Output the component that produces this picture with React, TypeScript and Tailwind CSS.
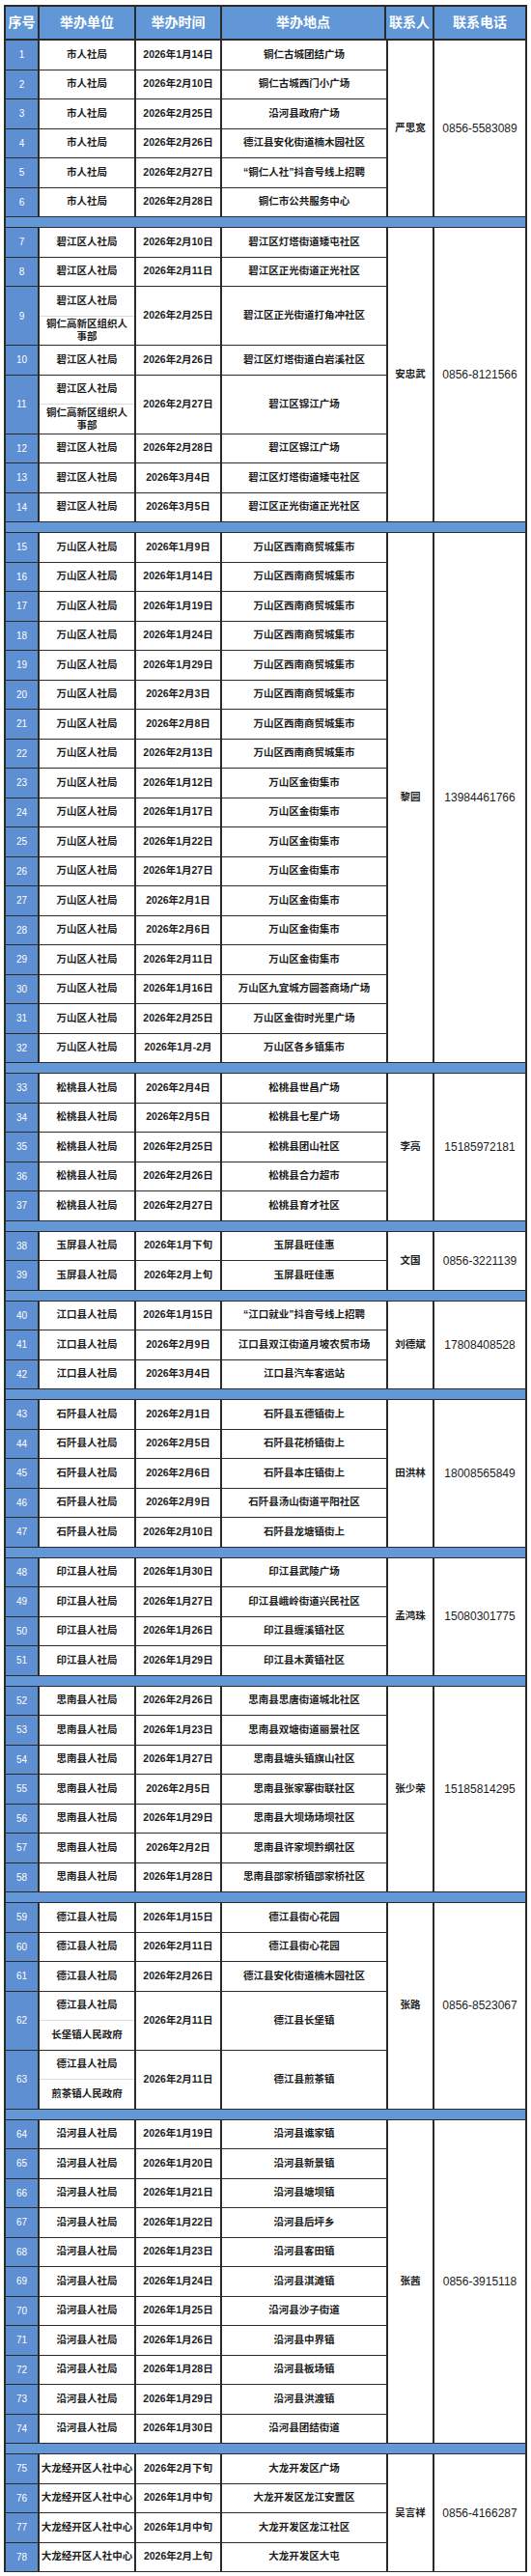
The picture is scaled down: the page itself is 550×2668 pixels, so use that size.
import React from "react";

type Row = { no: number; unit: string | string[]; date: string; place: string };
type Group = { contact: string; phone: string; rows: Row[] };

const line = "border-[#2b2b2b]";

// builds rows for a group where most rows share the same unit
function make(start: number, unit: string, items: [string, string, (string | string[])?][]): Row[] {
  return items.map(([date, place, u], i) => ({
    no: start + i,
    unit: u ?? unit,
    date,
    place,
  }));
}

const groups: Group[] = [
  {
    contact: "严思宽",
    phone: "0856-5583089",
    rows: make(1, "市人社局", [
      ["2026年1月14日", "铜仁古城团结广场"],
      ["2026年2月10日", "铜仁古城西门小广场"],
      ["2026年2月25日", "沿河县政府广场"],
      ["2026年2月26日", "德江县安化街道楠木园社区"],
      ["2026年2月27日", "“铜仁人社”抖音号线上招聘"],
      ["2026年2月28日", "铜仁市公共服务中心"],
    ]),
  },
  {
    contact: "安忠武",
    phone: "0856-8121566",
    rows: make(7, "碧江区人社局", [
      ["2026年2月10日", "碧江区灯塔街道矮屯社区"],
      ["2026年2月11日", "碧江区正光街道正光社区"],
      ["2026年2月25日", "碧江区正光街道打角冲社区", ["碧江区人社局", "铜仁高新区组织人事部"]],
      ["2026年2月26日", "碧江区灯塔街道白岩溪社区"],
      ["2026年2月27日", "碧江区锦江广场", ["碧江区人社局", "铜仁高新区组织人事部"]],
      ["2026年2月28日", "碧江区锦江广场"],
      ["2026年3月4日", "碧江区灯塔街道矮屯社区"],
      ["2026年3月5日", "碧江区正光街道正光社区"],
    ]),
  },
  {
    contact: "黎圆",
    phone: "13984461766",
    rows: make(15, "万山区人社局", [
      ["2026年1月9日", "万山区西南商贸城集市"],
      ["2026年1月14日", "万山区西南商贸城集市"],
      ["2026年1月19日", "万山区西南商贸城集市"],
      ["2026年1月24日", "万山区西南商贸城集市"],
      ["2026年1月29日", "万山区西南商贸城集市"],
      ["2026年2月3日", "万山区西南商贸城集市"],
      ["2026年2月8日", "万山区西南商贸城集市"],
      ["2026年2月13日", "万山区西南商贸城集市"],
      ["2026年1月12日", "万山区金街集市"],
      ["2026年1月17日", "万山区金街集市"],
      ["2026年1月22日", "万山区金街集市"],
      ["2026年1月27日", "万山区金街集市"],
      ["2026年2月1日", "万山区金街集市"],
      ["2026年2月6日", "万山区金街集市"],
      ["2026年2月11日", "万山区金街集市"],
      ["2026年1月16日", "万山区九宜城方圆荟商场广场"],
      ["2026年2月25日", "万山区金街时光里广场"],
      ["2026年1月-2月", "万山区各乡镇集市"],
    ]),
  },
  {
    contact: "李亮",
    phone: "15185972181",
    rows: make(33, "松桃县人社局", [
      ["2026年2月4日", "松桃县世昌广场"],
      ["2026年2月5日", "松桃县七星广场"],
      ["2026年2月25日", "松桃县团山社区"],
      ["2026年2月26日", "松桃县合力超市"],
      ["2026年2月27日", "松桃县育才社区"],
    ]),
  },
  {
    contact: "文国",
    phone: "0856-3221139",
    rows: make(38, "玉屏县人社局", [
      ["2026年1月下旬", "玉屏县旺佳惠"],
      ["2026年2月上旬", "玉屏县旺佳惠"],
    ]),
  },
  {
    contact: "刘德斌",
    phone: "17808408528",
    rows: make(40, "江口县人社局", [
      ["2026年1月15日", "“江口就业”抖音号线上招聘"],
      ["2026年2月9日", "江口县双江街道月坡农贸市场"],
      ["2026年3月4日", "江口县汽车客运站"],
    ]),
  },
  {
    contact: "田洪林",
    phone: "18008565849",
    rows: make(43, "石阡县人社局", [
      ["2026年2月1日", "石阡县五德镇街上"],
      ["2026年2月5日", "石阡县花桥镇街上"],
      ["2026年2月6日", "石阡县本庄镇街上"],
      ["2026年2月9日", "石阡县汤山街道平阳社区"],
      ["2026年2月10日", "石阡县龙塘镇街上"],
    ]),
  },
  {
    contact: "孟鸿珠",
    phone: "15080301775",
    rows: make(48, "印江县人社局", [
      ["2026年1月30日", "印江县武陵广场"],
      ["2026年1月27日", "印江县峨岭街道兴民社区"],
      ["2026年1月26日", "印江县缠溪镇社区"],
      ["2026年1月29日", "印江县木黄镇社区"],
    ]),
  },
  {
    contact: "张少荣",
    phone: "15185814295",
    rows: make(52, "思南县人社局", [
      ["2026年2月26日", "思南县思唐街道城北社区"],
      ["2026年1月23日", "思南县双塘街道丽景社区"],
      ["2026年1月27日", "思南县塘头镇旗山社区"],
      ["2026年2月5日", "思南县张家寨街联社区"],
      ["2026年1月29日", "思南县大坝场场坝社区"],
      ["2026年2月2日", "思南县许家坝黔纲社区"],
      ["2026年1月28日", "思南县邵家桥镇邵家桥社区"],
    ]),
  },
  {
    contact: "张路",
    phone: "0856-8523067",
    rows: make(59, "德江县人社局", [
      ["2026年1月15日", "德江县街心花园"],
      ["2026年2月11日", "德江县街心花园"],
      ["2026年2月26日", "德江县安化街道楠木园社区"],
      ["2026年2月11日", "德江县长堡镇", ["德江县人社局", "长堡镇人民政府"]],
      ["2026年2月11日", "德江县煎茶镇", ["德江县人社局", "煎茶镇人民政府"]],
    ]),
  },
  {
    contact: "张茜",
    phone: "0856-3915118",
    rows: make(64, "沿河县人社局", [
      ["2026年1月19日", "沿河县谯家镇"],
      ["2026年1月20日", "沿河县新景镇"],
      ["2026年1月21日", "沿河县塘坝镇"],
      ["2026年1月22日", "沿河县后坪乡"],
      ["2026年1月23日", "沿河县客田镇"],
      ["2026年1月24日", "沿河县淇滩镇"],
      ["2026年1月25日", "沿河县沙子街道"],
      ["2026年1月26日", "沿河县中界镇"],
      ["2026年1月28日", "沿河县板场镇"],
      ["2026年1月29日", "沿河县洪渡镇"],
      ["2026年1月30日", "沿河县团结街道"],
    ]),
  },
  {
    contact: "吴言祥",
    phone: "0856-4166287",
    rows: make(75, "大龙经开区人社中心", [
      ["2026年2月下旬", "大龙开发区广场"],
      ["2026年1月中旬", "大龙开发区龙江安置区"],
      ["2026年1月中旬", "大龙开发区龙江社区"],
      ["2026年2月上旬", "大龙开发区大屯"],
    ]),
  },
];

function UnitCell({ unit }: { unit: string | string[] }) {
  if (Array.isArray(unit)) {
    return (
      <div className={`flex flex-col border-r-2 ${line}`}>
        <div className="flex flex-1 items-center justify-center border-b border-[#dcdcdc] px-[6px]">{unit[0]}</div>
        <div className="flex flex-1 items-center justify-center px-[6px] text-center leading-[13px]">{unit[1]}</div>
      </div>
    );
  }
  return (
    <div className={`flex items-center justify-center whitespace-nowrap border-r-2 ${line}`}>
      {unit}
    </div>
  );
}

function DataRow({ row }: { row: Row }) {
  const tall = Array.isArray(row.unit);
  return (
    <div className={`grid grid-cols-[35px_100px_89px_1fr] border-b ${line} ${tall ? "h-[61px]" : "h-[30.5px]"}`}>
      <div className={`flex items-center justify-center border-r-2 ${line} bg-[#5d8fd2] text-[10px] font-normal text-white`}>
        {row.no}
      </div>
      <UnitCell unit={row.unit} />
      <div className={`flex items-center justify-center whitespace-nowrap border-r-2 ${line}`}>{row.date}</div>
      <div className="flex items-center justify-center whitespace-nowrap">{row.place}</div>
    </div>
  );
}

function GroupBlock({ group }: { group: Group }) {
  return (
    <div className="flex">
      <div className="flex w-[394px] flex-col">
        {group.rows.map((r) => (
          <DataRow key={r.no} row={r} />
        ))}
      </div>
      <div className={`flex w-[50px] items-center justify-center border-x-2 border-b ${line}`}>{group.contact}</div>
      <div className={`flex flex-1 items-center justify-center border-b ${line} text-[12px] font-normal`}>
        {group.phone}
      </div>
    </div>
  );
}

export default function App() {
  const heads = ["序号", "举办单位", "举办时间", "举办地点", "联系人", "联系电话"];
  return (
    <div className="min-h-[2668px] bg-white px-[4px] pt-[5px] font-['Liberation_Sans','Noto_Sans_CJK_SC',sans-serif] text-[10.5px] font-bold text-[#1c1c1c]">
      <div className={`border-2 border-b-0 ${line}`}>
        <div className={`grid h-[35px] grid-cols-[35px_100px_89px_170px_50px_1fr] border-b-2 ${line} bg-[#6196d7] text-[14px] text-white`}>
          {heads.map((h, i) => (
            <div
              key={h}
              className={`flex items-center justify-center whitespace-nowrap ${i < heads.length - 1 ? `border-r-2 ${line}` : ""}`}
            >
              {h}
            </div>
          ))}
        </div>
        {groups.map((g, i) => (
          <React.Fragment key={g.contact}>
            {i > 0 && <div className={`h-[11px] border-b ${line} bg-[#6398d8]`} />}
            <GroupBlock group={g} />
          </React.Fragment>
        ))}
      </div>
    </div>
  );
}
